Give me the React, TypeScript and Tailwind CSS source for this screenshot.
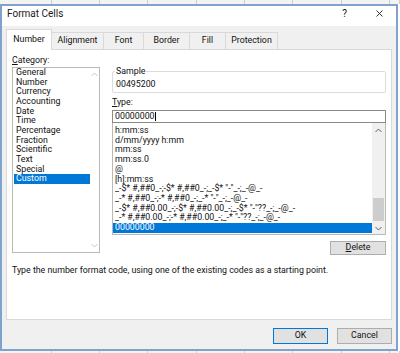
const categories = ['General', 'Number', 'Currency', 'Accounting', 'Date', 'Time', 'Percentage', 'Fraction', 'Scientific', 'Text', 'Special', 'Custom']

const types = [
  'h:mm:ss',
  'd/mm/yyyy h:mm',
  'mm:ss',
  'mm:ss.0',
  '@',
  '[h]:mm:ss',
  '_-$* #,##0_-;-$* #,##0_-;_-$* "-"_-;_-@_-',
  '_-* #,##0_-;-* #,##0_-;_-* "-"_-;_-@_-',
  '_-$* #,##0.00_-;-$* #,##0.00_-;_-$* "-"??_-;_-@_-',
  '_-* #,##0.00_-;-* #,##0.00_-;_-* "-"??_-;_-@_-',
  '00000000',
]

const tabs = [
  { label: 'Number', w: 'w-[46px]' },
  { label: 'Alignment', w: 'w-[52px]' },
  { label: 'Font', w: 'w-[40px]' },
  { label: 'Border', w: 'w-[46px]' },
  { label: 'Fill', w: 'w-[36px]' },
  { label: 'Protection', w: 'w-[52px]' },
]

const cells = ['w-[52px]', 'w-[48px]', 'w-[48px]', 'w-[49px]', 'w-[48px]', 'w-[48px]', 'w-[49px]', 'w-[48px]', 'w-[10px]']

function SheetStrip({ h }: { h: string }) {
  return (
    <div className={`flex shrink-0 bg-[#f3f3f3] ${h}`}>
      {cells.map((w, i) => (
        <div key={i} className={`${w} h-full border-r border-[#cfcfcf]`} />
      ))}
    </div>
  )
}

function Chevron({ up, color }: { up?: boolean; color: string }) {
  return (
    <svg width="7" height="5" viewBox="0 0 7 5" fill="none">
      <polyline
        points={up ? '0.5,4 3.5,1 6.5,4' : '0.5,1 3.5,4 6.5,1'}
        stroke={color}
        strokeWidth="1"
      />
    </svg>
  )
}

export default function App() {
  return (
    <div className="w-[400px] h-[353px] bg-white flex flex-col overflow-hidden font-['Roboto',sans-serif] text-[8.8px] text-[#111]">
      <SheetStrip h="h-[4px]" />

      <div className="w-[398px] h-[347px] shrink-0 border-2 border-[#7fa3cc] bg-[#f0f0f0] flex flex-col">
        {/* title bar */}
        <div className="h-[20px] bg-white shrink-0">
          <div className="h-[15px] flex items-center pl-[5px] pr-[13px]">
            <span className="text-[10px] text-[#1a1a1a]">Format Cells</span>
            <span className="ml-auto mr-[29px] text-[10px]">?</span>
            <svg width="7" height="7" viewBox="0 0 7 7">
              <path d="M0.5 0.5L6.5 6.5M6.5 0.5L0.5 6.5" stroke="#222" strokeWidth="0.9" />
            </svg>
          </div>
        </div>

        {/* tabs */}
        <div className="h-[23px] pl-[4px] flex items-end shrink-0">
          {tabs.map((t, i) =>
            i === 0 ? (
              <div
                key={t.label}
                className={`${t.w} h-[21px] -mb-px relative z-10 bg-white border border-b-0 border-[#d9d9d9] flex items-center justify-center`}
              >
                {t.label}
              </div>
            ) : (
              <div
                key={t.label}
                className={`${t.w} h-[17px] bg-[#f0f0f0] border border-l-0 border-b-0 border-[#d9d9d9] flex items-center justify-center`}
              >
                {t.label}
              </div>
            ),
          )}
        </div>

        {/* panel */}
        <div className="ml-[4px] w-[386px] h-[271px] shrink-0 bg-white border border-[#d9d9d9] pl-[5px] pt-[4px] flex flex-col">
          <div className="flex">
            {/* category column */}
            <div className="w-[88px] flex flex-col">
              <div className="h-[13px] leading-[13px]">
                <span className="underline">C</span>ategory:
              </div>
              <div className="h-[186px] border border-[#b9b9b9] flex">
                <div className="w-[77px] pl-[1px]">
                  {categories.map((c) => (
                    <div
                      key={c}
                      className={`h-[9.66px] leading-[9.66px] pl-[2px] whitespace-nowrap ${c === 'Custom' ? 'bg-[#0078d7] text-white' : ''}`}
                    >
                      {c}
                    </div>
                  ))}
                </div>
                <div className="flex-1 flex flex-col items-center justify-between pt-[4px] pb-[4px]">
                  <Chevron up color="#c8c8c8" />
                  <Chevron color="#c8c8c8" />
                </div>
              </div>
            </div>

            {/* right column */}
            <div className="ml-[12px] w-[274px] flex flex-col">
              <fieldset className="mt-[12px] border border-[#dcdcdc] rounded-[2px] pl-[2px]">
                <legend className="leading-[10px] px-[1px]">Sample</legend>
                <div className="h-[16px] leading-[16px] pl-px">00495200</div>
              </fieldset>

              <div className="mt-[2px] h-[14px] leading-[14px]">
                <span className="underline">T</span>ype:
              </div>
              <div className="mt-px h-[13px] border border-[#8a8a8a] flex items-center pl-[2px]">
                <span>00000000</span>
                <span className="w-px h-[9px] bg-black" />
              </div>

              <div className="h-[112px] border border-t-0 border-[#b9b9b9] flex">
                <div className="w-[259px] pt-[3px] overflow-hidden">
                  {types.map((t, i) => (
                    <div
                      key={i}
                      className={`h-[9.73px] leading-[9.73px] pl-[2px] whitespace-pre ${i === types.length - 1 ? 'bg-[#0078d7] text-white' : ''}`}
                    >
                      {t}
                    </div>
                  ))}
                </div>
                <div className="flex-1 bg-[#f0f0f0] flex flex-col items-center">
                  <div className="h-[14px] flex items-center">
                    <Chevron up color="#606060" />
                  </div>
                  <div className="flex-1 w-full flex flex-col">
                    <div className="mt-[61px] h-[23px] bg-[#cdcdcd] mx-[1px]" />
                  </div>
                  <div className="h-[12px] flex items-center">
                    <Chevron color="#606060" />
                  </div>
                </div>
              </div>

              <div className="mt-[6px] flex justify-end">
                <div className="w-[56px] h-[14px] bg-[#e1e1e1] border border-[#adadad] flex items-center justify-center">
                  <span className="underline">D</span>elete
                </div>
              </div>
            </div>
          </div>

          <div className="mt-[9px] h-[12px] leading-[12px]">
            Type the number format code, using one of the existing codes as a starting point.
          </div>
        </div>

        {/* buttons */}
        <div className="mt-[8px] pr-[4px] flex justify-end gap-[9px]">
          <div className="w-[55px] h-[16px] bg-[#e1e1e1] border border-[#0078d7] flex items-center justify-center">OK</div>
          <div className="w-[55px] h-[16px] bg-[#e1e1e1] border border-[#adadad] flex items-center justify-center">Cancel</div>
        </div>
      </div>

      <SheetStrip h="h-[2px]" />
    </div>
  )
}
